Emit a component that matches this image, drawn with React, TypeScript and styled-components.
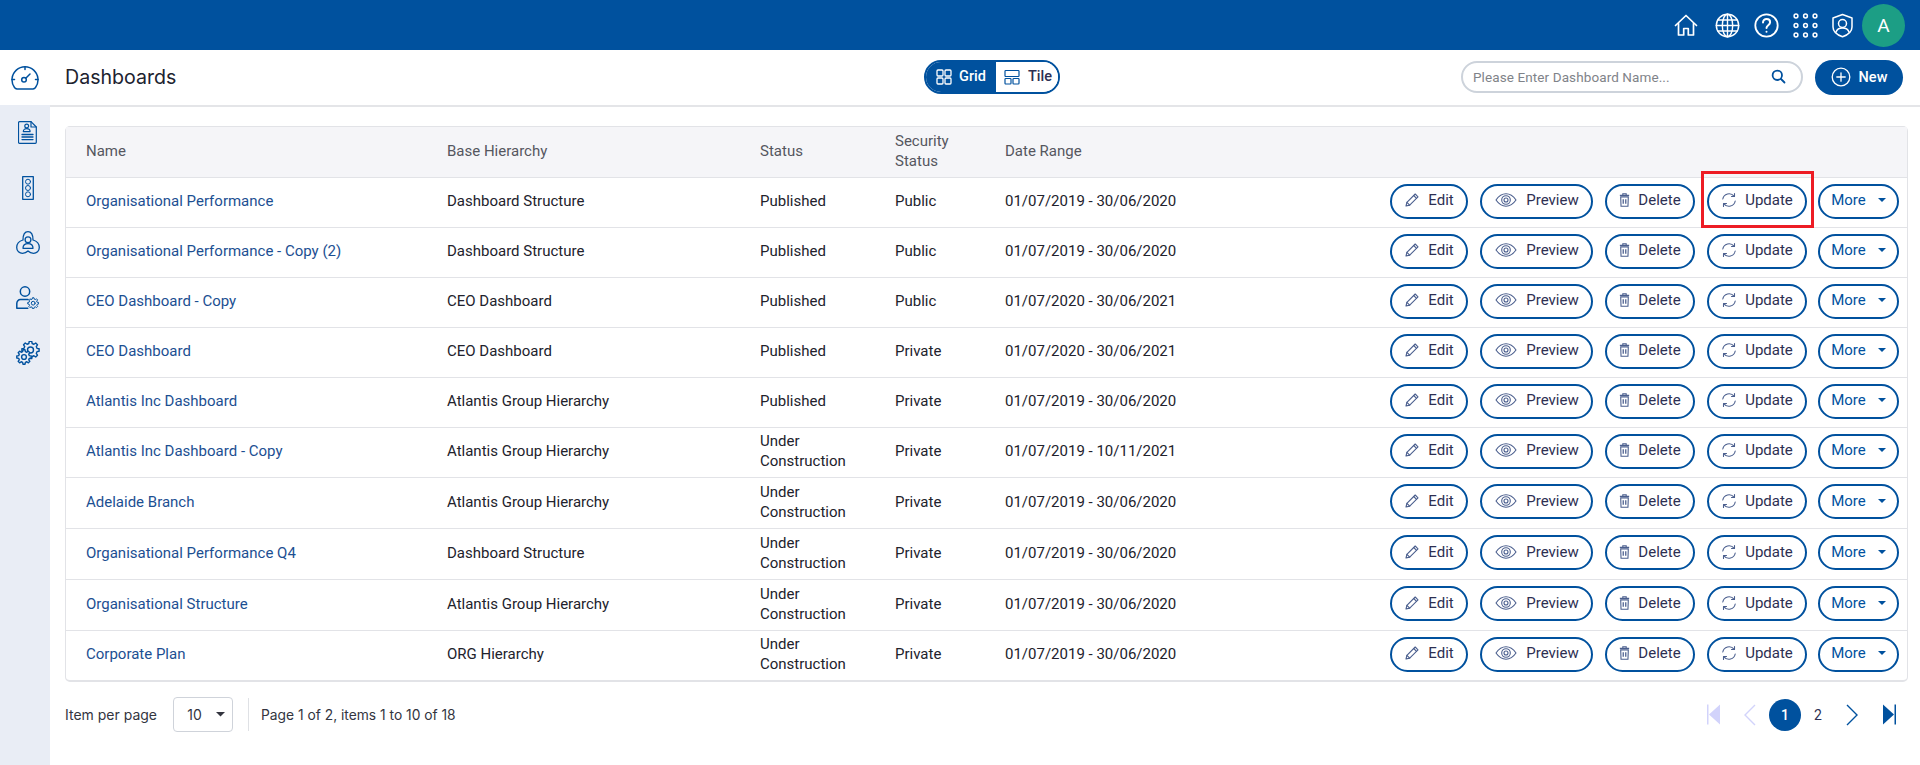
import React from "react";
import styled, { createGlobalStyle } from "styled-components";

const BLUE = "#00519e";
const SIDE_BG = "#e9edf5";

const Global = createGlobalStyle`
  html, body { margin: 0; padding: 0; background: #fff; }
  body { font-family: Roboto, "Liberation Sans", sans-serif; font-size: 14px; color: #22243a; }
  * { box-sizing: border-box; }
`;

const Page = styled.div`
  width: 1920px;
  height: 765px;
  display: flex;
  flex-direction: column;
  overflow: hidden;
`;
const TopBar = styled.header`
  height: 50px;
  background: ${BLUE};
  display: flex;
  align-items: center;
  justify-content: flex-end;
  padding-right: 15px;
  color: #fff;
`;
const TopIcon = styled.span<{ $mr: number }>`
  display: flex;
  margin-right: ${(p) => p.$mr}px;
`;
const Avatar = styled.div`
  width: 43px;
  height: 43px;
  border-radius: 50%;
  background: #1c9e85;
  display: flex;
  align-items: center;
  justify-content: center;
  font-size: 19px;
  color: #fff;
`;
const Body = styled.div`
  flex: 1;
  display: flex;
  min-height: 0;
`;
const Sidebar = styled.nav`
  width: 50px;
  background: ${SIDE_BG};
  display: flex;
  flex-direction: column;
  color: ${BLUE};
`;
const SideTop = styled.div`
  height: 55px;
  background: #fff;
  display: flex;
  align-items: center;
  justify-content: center;
`;
const SideItem = styled.div`
  height: 55px;
  padding-left: 5px;
  display: flex;
  align-items: center;
  justify-content: center;
`;
const Main = styled.main`
  flex: 1;
  min-width: 0;
  display: flex;
  flex-direction: column;
`;
const Header = styled.div`
  height: 57px;
  border-bottom: 2px solid #e4e5e8;
  display: grid;
  grid-template-columns: 859px 136px 1fr;
  align-items: center;
  padding: 0 17px 2px 15px;
`;
const Title = styled.h1`
  margin: 0;
  font-family: Inter, Roboto, sans-serif;
  font-weight: 400;
  font-size: 19.6px;
  color: #20222f;
`;
const Toggle = styled.div`
  height: 34px;
  border: 2px solid ${BLUE};
  border-radius: 17px;
  display: flex;
  overflow: hidden;
`;
const ToggleOpt = styled.div<{ $active?: boolean; $w: number }>`
  width: ${(p) => p.$w}px;
  display: flex;
  align-items: center;
  justify-content: center;
  gap: ${(p) => (p.$active ? 7 : 8)}px;
  padding-left: ${(p) => (p.$active ? 0 : 2)}px;
  font-size: 14.5px;
  font-weight: 500;
  background: ${(p) => (p.$active ? BLUE : "#fff")};
  color: ${(p) => (p.$active ? "#fff" : "#2d2f52")};
  svg { color: ${(p) => (p.$active ? "#fff" : BLUE)}; }
`;
const HeaderRight = styled.div`
  display: flex;
  justify-content: flex-end;
  align-items: center;
  gap: 12px;
`;
const Search = styled.div`
  width: 342px;
  height: 32px;
  border: 2px solid #cdd3db;
  border-radius: 16px;
  display: flex;
  align-items: center;
  justify-content: space-between;
  padding: 0 15px 0 10px;
  color: ${BLUE};
`;
const SearchInput = styled.span`
  font-size: 13.5px;
  color: #7f8389;
  letter-spacing: 0.1px;
`;
const NewButton = styled.button`
  width: 88px;
  height: 35px;
  margin-top: 1px;
  border: none;
  border-radius: 18px;
  background: ${BLUE};
  color: #fff;
  display: flex;
  align-items: center;
  justify-content: center;
  gap: 8px;
  font: 500 14.5px Roboto, sans-serif;
`;
const Content = styled.div`
  flex: 1;
  padding: 19px 12px 0 15px;
  display: flex;
  flex-direction: column;
`;
const TableCard = styled.div`
  border: 1px solid #e2e3e7;
  border-bottom-width: 2px;
  border-radius: 5px;
`;
const Table = styled.table`
  width: 100%;
  border-collapse: collapse;
  table-layout: fixed;
`;
const Col = styled.col<{ $w?: number }>`
  width: ${(p) => (p.$w ? `${p.$w}px` : "auto")};
`;
const Head = styled.th`
  background: #f5f5f8;
  height: 50px;
  padding: 0 20px 2px;
  text-align: left;
  font-weight: 400;
  font-size: 15px;
  line-height: 20px;
  color: #55575f;
  border-bottom: 1px solid #e2e3e7;
`;
const Row = styled.tr`
  height: 50px;
  &:not(:last-child) td { border-bottom: 1px solid #e2e3e7; }
`;
const TallRow = styled(Row)`
  height: 51px;
  &:last-child { height: 50px; }
`;
const Cell = styled.td`
  padding: 0 20px 2px;
  font-size: 15px;
  line-height: 20px;
  color: #22222c;
`;
const NameLink = styled.a`
  color: #1c4f92;
  text-decoration: none;
`;
const Actions = styled.div`
  display: flex;
  justify-content: flex-end;
  align-items: center;
  gap: 12px;
`;
const ActionCell = styled.td`
  padding: 0 8px 0 0;
`;
const ActionBtn = styled.button<{ $w: number }>`
  position: relative;
  width: ${(p) => p.$w}px;
  height: 35px;
  border: 2px solid ${BLUE};
  border-radius: 18px;
  background: #fff;
  display: flex;
  align-items: center;
  justify-content: center;
  gap: 8px;
  padding: 0 0 2px;
  margin-top: -2px;
  font: 400 15px Roboto, sans-serif;
  color: #2d2f52;
  svg { color: #4b5f8e; flex: none; }
`;
const MoreBtn = styled(ActionBtn)`
  margin-left: -1px;
  color: ${BLUE};
  gap: 12px;
  svg { color: ${BLUE}; }
`;
const Highlight = styled.span`
  position: absolute;
  left: -8px;
  right: -9px;
  top: -15px;
  bottom: -11px;
  border: 3px solid #ed1c24;
  pointer-events: none;
`;
const Footer = styled.div`
  display: flex;
  align-items: center;
  margin-top: 14px;
  height: 37px;
`;
const FooterText = styled.span<{ $size?: number }>`
  font-family: Inter, Roboto, sans-serif;
  font-size: ${(p) => p.$size ?? 14}px;
  color: #33353f;
`;
const Select = styled.div`
  width: 60px;
  height: 35px;
  border: 1px solid #cfd3da;
  border-radius: 4px;
  margin: 0 15px 0 16px;
  padding-left: 6px;
  display: flex;
  align-items: center;
  justify-content: center;
  gap: 14px;
  font-family: Inter, Roboto, sans-serif;
  font-size: 14px;
  color: #33353f;
`;
const Divider = styled.div`
  width: 1px;
  height: 33px;
  background: #dfe1e5;
  margin-right: 12px;
`;
const Pager = styled.div`
  margin-left: auto;
  display: flex;
  align-items: center;
  margin-right: 12px;
  color: ${BLUE};
`;
const PagerIcon = styled.span<{ $off?: boolean; $mr: number; $ml?: number }>`
  display: flex;
  margin-left: ${(p) => p.$ml ?? 0}px;
  margin-right: ${(p) => p.$mr}px;
  color: ${(p) => (p.$off ? "#d2d3fb" : BLUE)};
`;
const PageNum = styled.span<{ $active?: boolean }>`
  width: 32px;
  height: 32px;
  border-radius: 50%;
  margin-right: 1px;
  display: flex;
  align-items: center;
  justify-content: center;
  font-weight: ${(p) => (p.$active ? 500 : 400)};
  font-size: 14px;
  background: ${(p) => (p.$active ? BLUE : "transparent")};
  color: ${(p) => (p.$active ? "#fff" : "#2d2f52")};
`;

const Svg: React.FC<React.PropsWithChildren<{ w: number; h: number; sw?: number }>> = ({ w, h, sw = 1.3, children }) => (
  <svg width={w} height={h} viewBox={`0 0 ${w} ${h}`} fill="none" stroke="currentColor" strokeWidth={sw} strokeLinecap="round" strokeLinejoin="round">
    {children}
  </svg>
);

const gearPath = (cx: number, cy: number, R: number, r: number, teeth: number) => {
  const pts: string[] = [];
  const step = (Math.PI * 2) / teeth;
  for (let i = 0; i < teeth; i++) {
    const a = i * step;
    const at = (rad: number, t: number) =>
      `${(cx + rad * Math.cos(a + t * step)).toFixed(2)} ${(cy + rad * Math.sin(a + t * step)).toFixed(2)}`;
    pts.push(at(r, -0.32), at(R, -0.18), at(R, 0.18), at(r, 0.32));
  }
  return `M${pts.join("L")}z`;
};

const Home = () => (
  <Svg w={24} h={24} sw={1.7}>
    <path d="M1.5 12.5 12 2.500l10.500 10" />
    <path d="M4.500 10.500V22h5.200v-6.500h4.600V22h5.200V10.500" />
  </Svg>
);
const Globe = () => (
  <Svg w={25} h={25} sw={1.4}>
    <circle cx="12.500" cy="12.500" r="11.200" />
    <ellipse cx="12.500" cy="12.500" rx="5.200" ry="11.200" />
    <path d="M12.500 1.300v22.400M1.300 12.500h22.400M2.800 7h19.400M2.800 18h19.400" />
  </Svg>
);
const Help = () => (
  <Svg w={25} h={25} sw={1.8}>
    <circle cx="12.500" cy="12.500" r="11.200" />
    <path d="M9 9.600c0-2.100 1.500-3.500 3.600-3.500s3.500 1.400 3.500 3.200c0 2.900-3.600 3-3.600 5.800" strokeWidth="2" />
    <circle cx="12.500" cy="18.700" r="1" fill="currentColor" stroke="none" />
  </Svg>
);
const Dots = () => (
  <Svg w={25} h={25} sw={1.5}>
    {[3, 12.5, 22].map((y) => [3, 12.5, 22].map((x) => <circle key={`${x}-${y}`} cx={x} cy={y} r="1.900" />))}
  </Svg>
);
const ShieldUser = () => (
  <Svg w={25} h={25} sw={1.5}>
    <path d="M12.500 1.500 22 5v8.900c0 4.700-4.200 7.900-9.500 9.900C7.200 21.800 3 18.600 3 13.900V5z" />
    <circle cx="12.500" cy="10.500" r="4" />
    <path d="M6 19c1-2.700 3.600-3.900 6.500-3.900S18 16.300 19 19" />
  </Svg>
);
const Gauge = () => (
  <Svg w={28} h={24} sw={1.5}>
    <path d="M6 23h16a4 4 0 0 0 2.500-1.500A13 13 0 1 0 3.500 21.500 4 4 0 0 0 6 23z" />
    <circle cx="13" cy="13.800" r="2.300" />
    <path d="M15 12 19 8M14 1v2.500M1 13.500h2.500M24.500 13.500h2.500" />
  </Svg>
);
const Doc = () => (
  <Svg w={19} h={23} sw={1.2}>
    <path d="M1.500.7H13L18.300 6v15.300a1 1 0 0 1-1 1H1.500a1 1 0 0 1-1-1V1.700a1 1 0 0 1 1-1z" />
    <path d="M13 .7V6h5.300" />
    <circle cx="8.700" cy="5" r="1.900" />
    <path d="M5.300 10.600c0-2 1.400-3 3.400-3s3.400 1 3.400 3z" />
    <path d="M4 13.500h11M4 16h11M4 18.600h11" strokeWidth="1.300" />
  </Svg>
);
const Lights = () => (
  <Svg w={12} h={24} sw={1.3}>
    <rect x=".7" y=".7" width="10.600" height="22.600" />
    <circle cx="6" cy="5.700" r="2.500" strokeWidth="1" />
    <circle cx="6" cy="12" r="2.500" strokeWidth="1" />
    <circle cx="6" cy="18.300" r="2.500" strokeWidth="1" />
  </Svg>
);
const CloudUser = () => (
  <Svg w={24} h={23} sw={1.3}>
    <path d="M7 9C7 4 9 .7 12 .7S17 4 17 9c3.500 1 6.300 4 6.300 7.500s-2.800 5.800-5.800 5.800c-2 0-4-.8-5.500-2.300-1.500 1.500-3.500 2.300-5.500 2.300-3 0-5.800-2.300-5.800-5.800S3.500 10 7 9z" />
    <circle cx="12" cy="8.700" r="2.900" />
    <path d="M7 17.300c0-3 2-4.600 5-4.600s5 1.600 5 4.600z" />
  </Svg>
);
const UserGear = () => (
  <Svg w={23} h={23} sw={1.5}>
    <circle cx="9" cy="5.500" r="4.700" />
    <path d="M12 13.500H4.500C2.300 13.500.8 15.200.8 17.500v4.700h11" />
    <path d={gearPath(17.200, 17.200, 5.500, 4.200, 8)} strokeWidth="1" />
    <circle cx="17.200" cy="17.200" r="1.900" strokeWidth="1" />
  </Svg>
);
const Gears = () => (
  <Svg w={24} h={24} sw={1.4}>
    <path d={gearPath(14.500, 9, 8.700, 6.700, 8)} />
    <circle cx="14.500" cy="9" r="3" />
    <path d={gearPath(8, 16, 7.300, 5.500, 8)} fill={SIDE_BG} />
    <circle cx="8" cy="16" r="2.400" />
  </Svg>
);
const GridIcon = () => (
  <Svg w={16} h={16} sw={1.3}>
    <rect x="1" y="1" width="6" height="6" rx="1" />
    <rect x="9" y="1" width="6" height="6" rx="1" />
    <rect x="1" y="9" width="6" height="6" rx="1" />
    <rect x="9" y="9" width="6" height="6" rx="1" />
  </Svg>
);
const TileIcon = () => (
  <Svg w={16} h={16} sw={1.2}>
    <rect x="1" y="1.500" width="14" height="6" rx=".8" />
    <rect x="1" y="9.500" width="6" height="5.500" rx=".8" />
    <rect x="9" y="9.500" width="6" height="5.500" rx=".8" />
  </Svg>
);
const SearchIcon = () => (
  <Svg w={15} h={15} sw={1.8}>
    <circle cx="6.300" cy="6.300" r="4.700" />
    <path d="m10 10 3.500 3.500" />
  </Svg>
);
const PlusCircle = () => (
  <Svg w={20} h={20} sw={1.3}>
    <circle cx="10" cy="10" r="8.800" />
    <path d="M10 5.800v8.400M5.800 10h8.400" />
  </Svg>
);
const Pencil = () => (
  <Svg w={16} h={16} sw={1.1}>
    <path d="M2 14l.9-3.700L11.200 2 14 4.800l-8.300 8.300z" />
    <path d="M2.900 10.300l2.800 2.800M9.700 3.500l2.800 2.800" />
  </Svg>
);
const Eye = () => (
  <Svg w={24} h={16} sw={1.1}>
    <path d="M2 8c2.800-4 6.200-6.200 10-6.200S19.200 4 22 8c-2.800 4-6.200 6.200-10 6.200S4.800 12 2 8z" />
    <circle cx="12" cy="8" r="4.300" />
    <circle cx="12" cy="8" r="2" />
  </Svg>
);
const Trash = () => (
  <svg width="11" height="16" viewBox="0 0 13 17" fill="none" stroke="currentColor" strokeWidth="1.300">
    <path d="M2 4.800h9l-.4 11H2.400z" />
    <path d="M1 3h11M4.500 2.800V1.200h4v1.600" />
    <path d="M5 7.500v5.500M8 7.500v5.500" strokeWidth="1.500" />
  </svg>
);
const Refresh = () => (
  <Svg w={16} h={16} sw={1.100}>
    <path d="M1.800 7A6.300 6.300 0 0 1 13 4.200" />
    <path d="M13.500 1.500v3h-3" />
    <path d="M14.200 9A6.300 6.300 0 0 1 3 11.800" />
    <path d="M2.500 14.500v-3h3" />
  </Svg>
);
const Caret: React.FC<{ w?: number }> = ({ w = 8 }) => (
  <svg width={w} height={w / 2} viewBox="0 0 8 4" fill="currentColor">
    <path d="M0 0h8L4 4z" />
  </svg>
);
const First = () => (
  <svg width="13" height="21" viewBox="0 0 13 20" fill="currentColor">
    <path d="M0 0h1.500v20H0zM13 0v20L2 10z" />
  </svg>
);
const Last = () => (
  <svg width="13" height="21" viewBox="0 0 13 20" fill="currentColor">
    <path d="M13 0h-1.500v20H13zM0 0v20l11-10z" />
  </svg>
);
const ChevL = () => (
  <svg width="13" height="22" viewBox="0 0 13 22" fill="none" stroke="currentColor" strokeWidth="1.400">
    <path d="M12 1 2 11l10 10" />
  </svg>
);
const ChevR = () => (
  <svg width="13" height="22" viewBox="0 0 13 22" fill="none" stroke="currentColor" strokeWidth="1.400">
    <path d="m1 1 10 10L1 21" />
  </svg>
);

const rows = [
  ["Organisational Performance", "Dashboard Structure", "Published", "Public", "01/07/2019 - 30/06/2020"],
  ["Organisational Performance - Copy (2)", "Dashboard Structure", "Published", "Public", "01/07/2019 - 30/06/2020"],
  ["CEO Dashboard - Copy", "CEO Dashboard", "Published", "Public", "01/07/2020 - 30/06/2021"],
  ["CEO Dashboard", "CEO Dashboard", "Published", "Private", "01/07/2020 - 30/06/2021"],
  ["Atlantis Inc Dashboard", "Atlantis Group Hierarchy", "Published", "Private", "01/07/2019 - 30/06/2020"],
  ["Atlantis Inc Dashboard - Copy", "Atlantis Group Hierarchy", "Under Construction", "Private", "01/07/2019 - 10/11/2021"],
  ["Adelaide Branch", "Atlantis Group Hierarchy", "Under Construction", "Private", "01/07/2019 - 30/06/2020"],
  ["Organisational Performance Q4", "Dashboard Structure", "Under Construction", "Private", "01/07/2019 - 30/06/2020"],
  ["Organisational Structure", "Atlantis Group Hierarchy", "Under Construction", "Private", "01/07/2019 - 30/06/2020"],
  ["Corporate Plan", "ORG Hierarchy", "Under Construction", "Private", "01/07/2019 - 30/06/2020"],
];

export default function App() {
  return (
    <Page>
      <Global />
      <TopBar>
        <TopIcon $mr={17}><Home /></TopIcon>
        <TopIcon $mr={14}><Globe /></TopIcon>
        <TopIcon $mr={14}><Help /></TopIcon>
        <TopIcon $mr={12}><Dots /></TopIcon>
        <TopIcon $mr={7}><ShieldUser /></TopIcon>
        <Avatar>A</Avatar>
      </TopBar>
      <Body>
        <Sidebar>
          <SideTop><Gauge /></SideTop>
          <SideItem><Doc /></SideItem>
          <SideItem><Lights /></SideItem>
          <SideItem><CloudUser /></SideItem>
          <SideItem><UserGear /></SideItem>
          <SideItem><Gears /></SideItem>
        </Sidebar>
        <Main>
          <Header>
            <Title>Dashboards</Title>
            <Toggle>
              <ToggleOpt $active $w={70}><GridIcon />Grid</ToggleOpt>
              <ToggleOpt $w={62}><TileIcon />Tile</ToggleOpt>
            </Toggle>
            <HeaderRight>
              <Search>
                <SearchInput>Please Enter Dashboard Name...</SearchInput>
                <SearchIcon />
              </Search>
              <NewButton><PlusCircle />New</NewButton>
            </HeaderRight>
          </Header>
          <Content>
            <TableCard>
              <Table>
                <colgroup>
                  <Col $w={361} />
                  <Col $w={313} />
                  <Col $w={135} />
                  <Col $w={110} />
                  <Col $w={300} />
                  <Col />
                </colgroup>
                <thead>
                  <tr>
                    <Head>Name</Head>
                    <Head>Base Hierarchy</Head>
                    <Head>Status</Head>
                    <Head>Security Status</Head>
                    <Head>Date Range</Head>
                    <Head />
                  </tr>
                </thead>
                <tbody>
                  {rows.map((r, i) => {
                    const R = i >= 6 ? TallRow : Row;
                    return (
                      <R key={r[0]}>
                        <Cell><NameLink>{r[0]}</NameLink></Cell>
                        <Cell>{r[1]}</Cell>
                        <Cell>{r[2]}</Cell>
                        <Cell>{r[3]}</Cell>
                        <Cell>{r[4]}</Cell>
                        <ActionCell>
                          <Actions>
                            <ActionBtn $w={78}><Pencil />Edit</ActionBtn>
                            <ActionBtn $w={113}><Eye />Preview</ActionBtn>
                            <ActionBtn $w={90}><Trash />Delete</ActionBtn>
                            <ActionBtn $w={100}>
                              <Refresh />Update
                              {i === 0 && <Highlight />}
                            </ActionBtn>
                            <MoreBtn $w={81}>More<Caret /></MoreBtn>
                          </Actions>
                        </ActionCell>
                      </R>
                    );
                  })}
                </tbody>
              </Table>
            </TableCard>
            <Footer>
              <FooterText>Item per page</FooterText>
              <Select>10<Caret w={9} /></Select>
              <Divider />
              <FooterText $size={13.8}>Page 1 of 2, items 1 to 10 of 18</FooterText>
              <Pager>
                <PagerIcon $off $mr={23}><First /></PagerIcon>
                <PagerIcon $off $mr={13}><ChevL /></PagerIcon>
                <PageNum $active>1</PageNum>
                <PageNum>2</PageNum>
                <PagerIcon $ml={11} $mr={24}><ChevR /></PagerIcon>
                <PagerIcon $mr={0}><Last /></PagerIcon>
              </Pager>
            </Footer>
          </Content>
        </Main>
      </Body>
    </Page>
  );
}
